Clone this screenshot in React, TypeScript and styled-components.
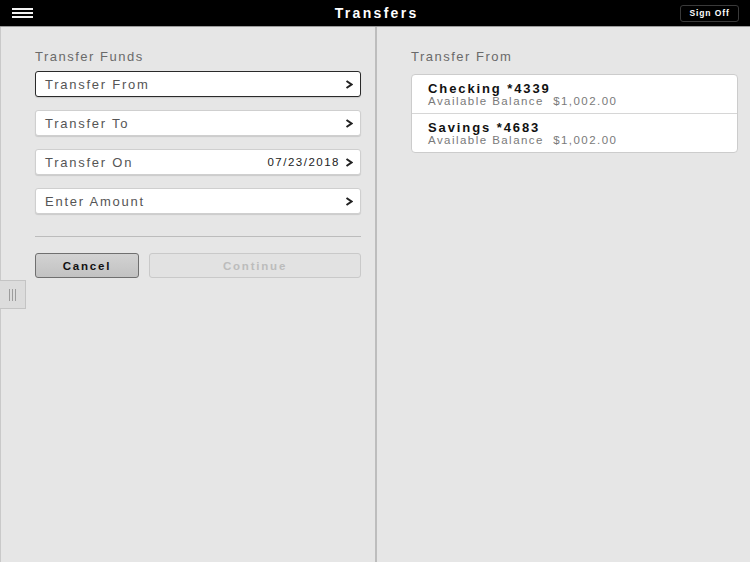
import React from 'react';
import styled, { createGlobalStyle } from 'styled-components';

const GlobalStyle = createGlobalStyle`
  html, body { margin: 0; padding: 0; }
  body {
    font-family: "Liberation Sans", Arial, sans-serif;
    background: #e6e6e6;
  }
`;

const Page = styled.div`
  width: 750px;
  height: 562px;
  display: flex;
  flex-direction: column;
  overflow: hidden;
`;

const Header = styled.header`
  height: 26px;
  background: #000;
  border-bottom: 1px solid #9a9a9a;
  display: grid;
  grid-template-columns: 1fr auto 1fr;
  align-items: center;
  padding: 0 11px 0 12px;
  flex-shrink: 0;
`;

const Burger = styled.div`
  display: flex;
  flex-direction: column;
  gap: 2px;
  width: 21px;
  span {
    height: 2px;
    background: #f2f2f2;
  }
`;

const Title = styled.h1`
  margin: 0;
  color: #fff;
  font-size: 14px;
  font-weight: bold;
  letter-spacing: 2.3px;
  margin-right: -2.3px;
`;

const SignOff = styled.button`
  justify-self: end;
  background: #000;
  color: #fff;
  border: 1px solid #3a3a3a;
  border-radius: 3px;
  font-family: inherit;
  font-size: 8.5px;
  font-weight: bold;
  height: 17px;
  width: 59px;
  padding: 0;
  letter-spacing: 0.9px;
`;

const Body = styled.div`
  flex: 1;
  display: grid;
  grid-template-columns: 377px 1fr;
`;

const Panel = styled.section<{ $left?: boolean }>`
  position: relative;
  background: #e6e6e6;
  padding: ${p => (p.$left ? '22px 14px 0 34px' : '22px 12px 0 34px')};
  border-left: ${p => (p.$left ? '1px solid #c9c9c9' : 'none')};
  border-right: ${p => (p.$left ? '2px solid #bdbdbd' : 'none')};
`;

const SectionLabel = styled.div`
  color: #6a6a6a;
  font-size: 13px;
  line-height: 15px;
  letter-spacing: 1.5px;
  margin: 0 0 7px;
`;

const FieldList = styled.div`
  display: flex;
  flex-direction: column;
  gap: 13px;
`;

const Field = styled.div<{ $active?: boolean }>`
  height: 24px;
  background: #fff;
  border: 1px solid ${p => (p.$active ? '#2a2a2a' : '#cfcfcf')};
  border-radius: 3px;
  box-shadow: 0 1px 1px rgba(0, 0, 0, 0.12);
  display: flex;
  align-items: center;
  padding: 0 7px 0 9px;
  color: #555;
  font-size: 13px;
  letter-spacing: 1.75px;
`;

const FieldLabel = styled.span`
  flex: 1;
`;

const FieldValue = styled.span`
  color: #222;
  font-size: 11.5px;
  letter-spacing: 1.5px;
  margin-right: 5px;
`;

const Chevron = () => (
  <svg width="8" height="9" viewBox="0 0 8 9">
    <path d="M1.5 1 L6.5 4.5 L1.5 8" fill="none" stroke="#222" strokeWidth="2" />
  </svg>
);

const Rule = styled.hr`
  border: none;
  border-top: 1px solid #bcbcbc;
  margin: 22px 0 16px;
`;

const Buttons = styled.div`
  display: grid;
  grid-template-columns: 104px 1fr;
  gap: 10px;
`;

const Btn = styled.button<{ $disabled?: boolean }>`
  height: 25px;
  border-radius: 3px;
  font-family: inherit;
  font-size: 11.5px;
  font-weight: bold;
  letter-spacing: 1.8px;
  padding: 0;
  border: 1px solid ${p => (p.$disabled ? '#c9c9c9' : '#6f6f6f')};
  background: ${p =>
    p.$disabled ? '#e2e2e2' : 'linear-gradient(#d2d2d2, #c2c2c2)'};
  color: ${p => (p.$disabled ? '#bcbcbc' : '#111')};
`;

const Handle = styled.div`
  position: absolute;
  left: -1px;
  top: 253px;
  width: 25px;
  height: 27px;
  background: #dcdcdc;
  border: 1px solid #c4c4c4;
  border-left: none;
  display: flex;
  justify-content: center;
  align-items: center;
  gap: 2px;
  span {
    width: 1px;
    height: 12px;
    background: #9c9c9c;
  }
`;

const AccountList = styled.div`
  background: #fff;
  border: 1px solid #cccccc;
  border-radius: 4px;
  margin-top: 10px;
`;

const Account = styled.div`
  padding: 7px 16px 6px;
  height: 25px;
  & + & {
    border-top: 1px solid #d6d6d6;
  }
`;

const AccountName = styled.div`
  font-size: 13px;
  font-weight: bold;
  color: #111;
  letter-spacing: 1.9px;
  line-height: 13px;
`;

const AccountBalance = styled.div`
  font-size: 11.5px;
  color: #7a7a7a;
  letter-spacing: 1.45px;
  line-height: 12px;
`;

const fields = [
  { label: 'Transfer From', active: true },
  { label: 'Transfer To' },
  { label: 'Transfer On', value: '07/23/2018' },
  { label: 'Enter Amount' },
];

const accounts = [
  { name: 'Checking *4339', balance: '$1,002.00' },
  { name: 'Savings *4683', balance: '$1,002.00' },
];

export default function App() {
  return (
    <Page>
      <GlobalStyle />
      <Header>
        <Burger>
          <span />
          <span />
          <span />
        </Burger>
        <Title>Transfers</Title>
        <SignOff>Sign Off</SignOff>
      </Header>
      <Body>
        <Panel $left>
          <SectionLabel>Transfer Funds</SectionLabel>
          <FieldList>
            {fields.map(f => (
              <Field key={f.label} $active={f.active}>
                <FieldLabel>{f.label}</FieldLabel>
                {f.value && <FieldValue>{f.value}</FieldValue>}
                <Chevron />
              </Field>
            ))}
          </FieldList>
          <Rule />
          <Buttons>
            <Btn>Cancel</Btn>
            <Btn $disabled>Continue</Btn>
          </Buttons>
          <Handle>
            <span />
            <span />
            <span />
          </Handle>
        </Panel>
        <Panel>
          <SectionLabel>Transfer From</SectionLabel>
          <AccountList>
            {accounts.map(a => (
              <Account key={a.name}>
                <AccountName>{a.name}</AccountName>
                <AccountBalance>Available Balance&nbsp; {a.balance}</AccountBalance>
              </Account>
            ))}
          </AccountList>
        </Panel>
      </Body>
    </Page>
  );
}
